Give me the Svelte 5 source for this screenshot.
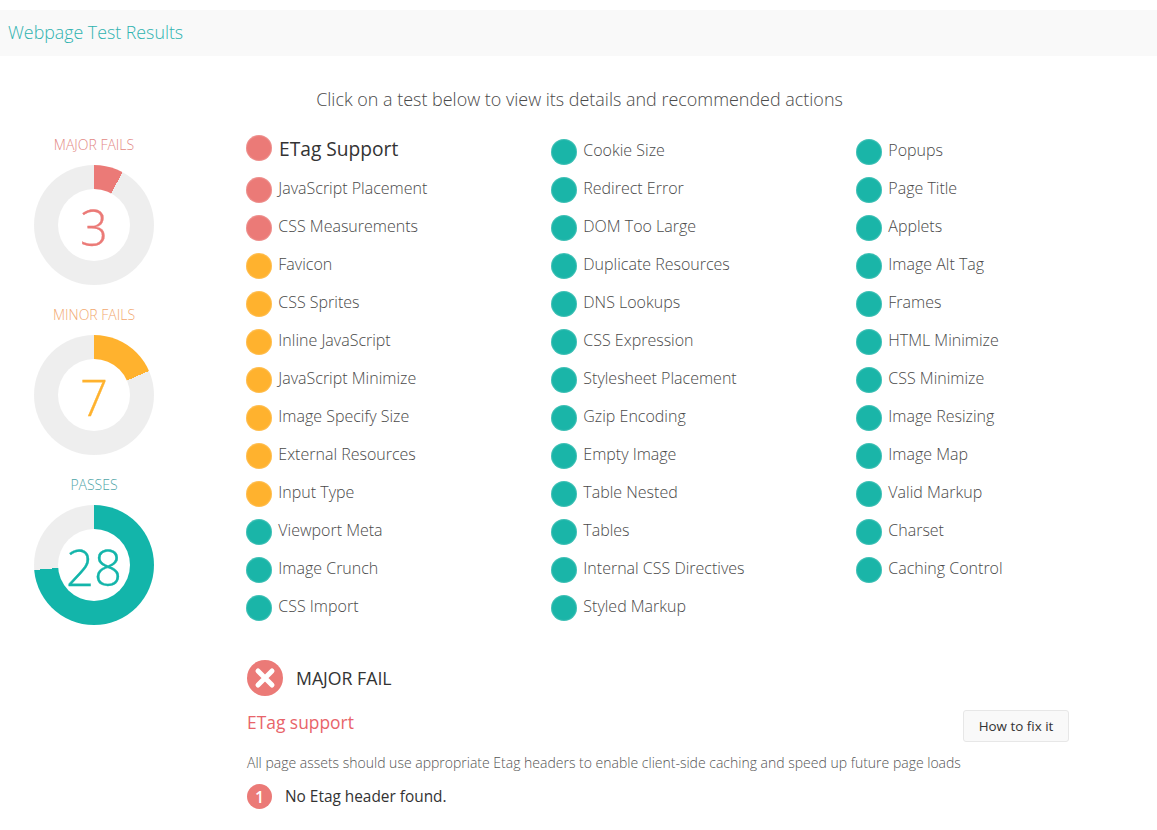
<script>
  const gauges = [
    { label: "MAJOR FAILS", value: 3, color: "#eb7a77", labelColor: "#e38985" },
    { label: "MINOR FAILS", value: 7, color: "#ffb22e", labelColor: "#f2a970" },
    { label: "PASSES", value: 28, color: "#13b5aa", labelColor: "#4fa5a8" }
  ];
  const total = 38;

  const columns = [
    [
      ["ETag Support", "red"],
      ["JavaScript Placement", "red"],
      ["CSS Measurements", "red"],
      ["Favicon", "amber"],
      ["CSS Sprites", "amber"],
      ["Inline JavaScript", "amber"],
      ["JavaScript Minimize", "amber"],
      ["Image Specify Size", "amber"],
      ["External Resources", "amber"],
      ["Input Type", "amber"],
      ["Viewport Meta", "teal"],
      ["Image Crunch", "teal"],
      ["CSS Import", "teal"]
    ],
    [
      ["Cookie Size", "teal"],
      ["Redirect Error", "teal"],
      ["DOM Too Large", "teal"],
      ["Duplicate Resources", "teal"],
      ["DNS Lookups", "teal"],
      ["CSS Expression", "teal"],
      ["Stylesheet Placement", "teal"],
      ["Gzip Encoding", "teal"],
      ["Empty Image", "teal"],
      ["Table Nested", "teal"],
      ["Tables", "teal"],
      ["Internal CSS Directives", "teal"],
      ["Styled Markup", "teal"]
    ],
    [
      ["Popups", "teal"],
      ["Page Title", "teal"],
      ["Applets", "teal"],
      ["Image Alt Tag", "teal"],
      ["Frames", "teal"],
      ["HTML Minimize", "teal"],
      ["CSS Minimize", "teal"],
      ["Image Resizing", "teal"],
      ["Image Map", "teal"],
      ["Valid Markup", "teal"],
      ["Charset", "teal"],
      ["Caching Control", "teal"]
    ]
  ];
</script>

<div class="page">
  <nav class="navbar">Webpage Test Results</nav>
  <p class="hint">Click on a test below to view its details and recommended actions</p>

  <div class="content">
    <aside class="sidebar">
      {#each gauges as g}
        <div class="gauge">
          <div class="gauge-label" style="color: {g.labelColor}">{g.label}</div>
          <div
            class="donut"
            style="background: conic-gradient({g.color} {(g.value / total) * 360}deg, #eeeeee 0)"
          >
            <div class="donut-hole" style="color: {g.color}">{g.value}</div>
          </div>
        </div>
      {/each}
    </aside>

    <main class="main">
      <div class="tests">
        {#each columns as col}
          <ul class="col">
            {#each col as [name, tone], i}
              <li class="test" class:active={name === "ETag Support"}>
                <span class="dot {tone}"></span>
                <span>{name}</span>
              </li>
            {/each}
          </ul>
        {/each}
      </div>

      <section class="detail">
        <div class="status">
          <span class="fail-icon">
            <svg width="36" height="36" viewBox="0 0 36 36">
              <path d="M11 11 L25 25 M25 11 L11 25" stroke="#fff" stroke-width="5" stroke-linecap="round" fill="none" />
            </svg>
          </span>
          <span>MAJOR FAIL</span>
        </div>
        <div class="detail-head">
          <h2>ETag support</h2>
          <button>How to fix it</button>
        </div>
        <p class="desc">All page assets should use appropriate Etag headers to enable client-side caching and speed up future page loads</p>
        <div class="finding">
          <span class="num">1</span>
          <span>No Etag header found.</span>
        </div>
      </section>
    </main>
  </div>
</div>

<style>
  :global(body) {
    margin: 0;
    background: #fff;
  }

  .page {
    height: 830px;
    overflow: hidden;
    padding-top: 10px;
    box-sizing: border-box;
    font-family: "Open Sans", "Liberation Sans", sans-serif;
    font-weight: 300;
    color: #4a4a4a;
  }

  .navbar {
    height: 46px;
    line-height: 45px;
    padding-left: 8px;
    background: #f9f9f9;
    color: #2fb3b0;
    font-size: 17.8px;
  }

  .hint {
    margin: 30px 0 0;
    height: 27px;
    line-height: 27px;
    text-align: center;
    font-size: 17.95px;
    padding-left: 2px;
  }

  .content {
    display: flex;
    margin-top: 18px;
  }

  .sidebar {
    width: 188px;
    margin-right: 58px;
    padding-top: 3px;
    flex: none;
    display: flex;
    flex-direction: column;
    gap: 19px;
  }

  .gauge {
    display: flex;
    flex-direction: column;
    align-items: center;
    gap: 9px;
  }

  .gauge-label {
    height: 22px;
    line-height: 22px;
    font-size: 14px;
  }

  .donut {
    width: 120px;
    height: 120px;
    border-radius: 50%;
    display: flex;
    align-items: center;
    justify-content: center;
  }

  .donut-hole {
    width: 72px;
    height: 72px;
    padding-top: 3px;
    box-sizing: border-box;
    border-radius: 50%;
    background: #fff;
    display: flex;
    align-items: center;
    justify-content: center;
    font-size: 49px;
    -webkit-text-stroke: 0.3px;
  }

  .main {
    flex: 1;
    min-width: 0;
  }

  .tests {
    display: flex;
  }

  .col {
    list-style: none;
    margin: 0;
    padding: 0;
    width: 305px;
    flex: none;
  }

  .test {
    height: 38px;
    box-sizing: border-box;
    display: flex;
    align-items: center;
    gap: 6.3px;
    font-size: 16px;
  }

  .test .dot {
    margin-top: 4px;
  }

  .test.active {
    padding-bottom: 4px;
    gap: 7px;
    font-size: 19.2px;
    font-weight: 400;
    color: #333;
  }

  .test.active .dot {
    margin-top: 0;
  }

  .dot {
    width: 26px;
    height: 26px;
    border-radius: 50%;
    flex: none;
    box-shadow: inset 0 0 1px 1px rgba(255, 255, 255, 0.18);
  }

  .red { background: #eb7a77; }
  .amber { background: #ffb22e; }
  .teal { background: #1ab5a8; }

  .detail {
    margin-top: 35px;
    padding-left: 1px;
    width: 822px;
  }

  .status {
    display: flex;
    align-items: center;
    gap: 13px;
    font-size: 17.7px;
    font-weight: 400;
    color: #333;
  }

  .fail-icon {
    width: 36px;
    height: 36px;
    border-radius: 50%;
    background: #eb7a77;
    flex: none;
    display: block;
  }

  .fail-icon svg {
    display: block;
  }

  .detail-head {
    display: flex;
    justify-content: space-between;
    align-items: center;
    margin-top: 10px;
    height: 40px;
  }

  h2 {
    margin: 0 0 9px;
    font-size: 17.4px;
    font-weight: 400;
    color: #e8646a;
  }

  button {
    width: 106px;
    height: 32px;
    padding: 0;
    border: 1px solid #e7e7e7;
    border-radius: 3px;
    background: #f9f9f9;
    font: 400 13.4px "Open Sans", "Liberation Sans", sans-serif;
    color: #333;
  }

  .desc {
    margin: 7px 0 0;
    font-size: 14px;
    line-height: 20px;
    color: #555;
  }

  .finding {
    display: flex;
    align-items: center;
    gap: 13px;
    margin-top: 11px;
    font-size: 15.4px;
    font-weight: 400;
    color: #333;
  }

  .num {
    width: 25px;
    height: 25px;
    border-radius: 50%;
    background: #eb7a77;
    color: #fff;
    display: flex;
    align-items: center;
    justify-content: center;
    font-size: 16px;
    font-weight: 600;
    flex: none;
  }
</style>
